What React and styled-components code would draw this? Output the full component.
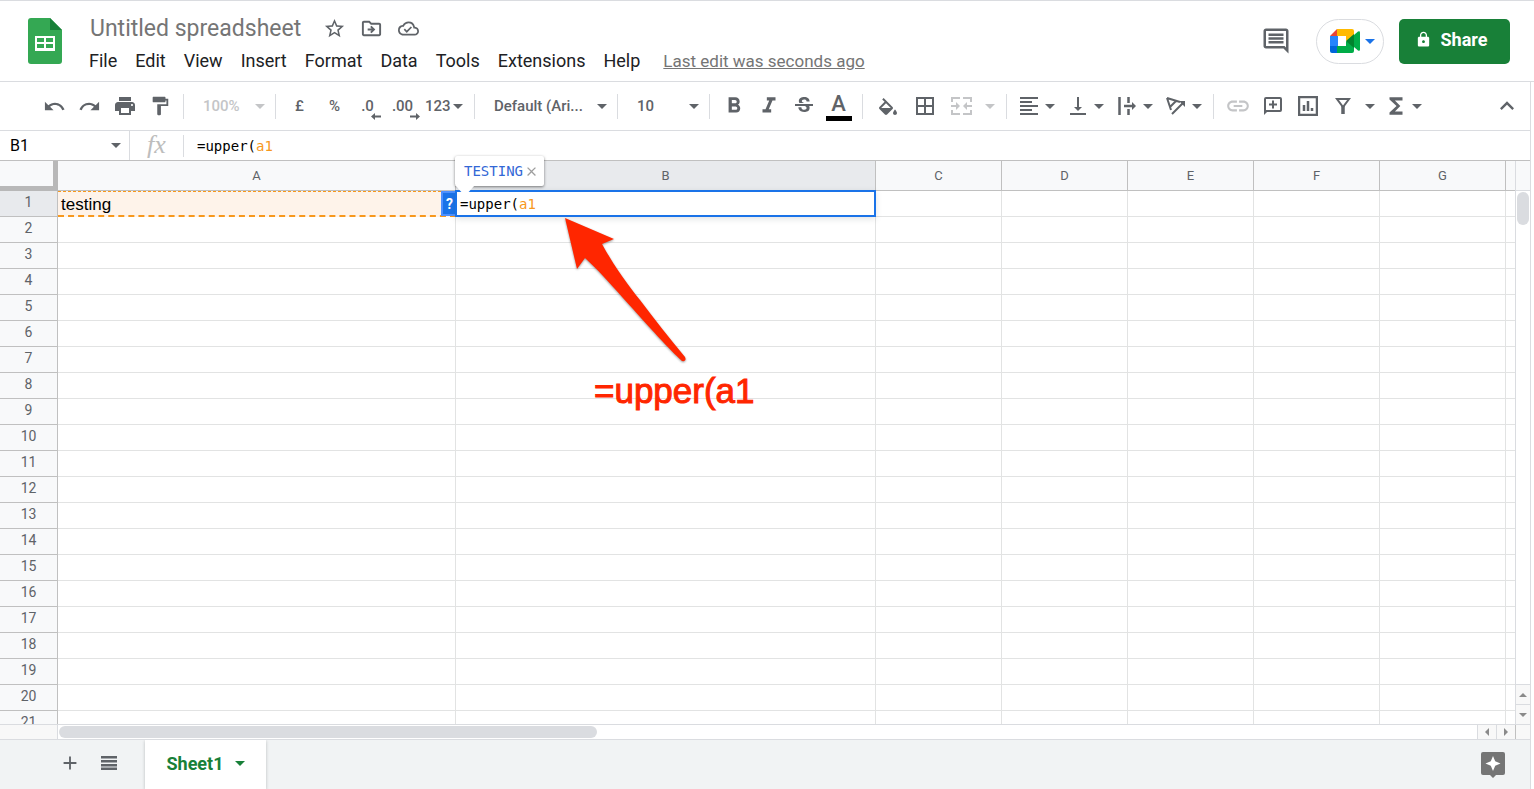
import { useState } from 'react';
import styled, { createGlobalStyle } from 'styled-components';
import {
  MdStarBorder, MdOutlineDriveFileMove, MdOutlineCloudDone, MdOutlineInsertComment, MdLock,
  MdUndo, MdRedo, MdPrint, MdFormatPaint, MdFormatBold, MdFormatItalic, MdStrikethroughS,
  MdBorderAll, MdFormatAlignLeft, MdVerticalAlignBottom, MdInsertLink,
  MdFunctions, MdKeyboardArrowUp, MdAdd, MdClose
} from 'react-icons/md';

const columnas = ['A', 'B', 'C', 'D', 'E', 'F', 'G', ''];
const filas = Array.from({ length: 21 }, (_, i) => i + 1);
const menus = ['File', 'Edit', 'View', 'Insert', 'Format', 'Data', 'Tools', 'Extensions', 'Help'];

/* Small triangle of every drop-down */
const Caret = ({ color = 'currentColor' }) => (
  <svg width="10" height="5" viewBox="0 0 10 5" fill={color} aria-hidden="true">
    <path d="M0 0h10L5 5z" />
  </svg>
);

const SheetsLogo = () => (
  <svg width="34" height="46" viewBox="0 0 34 46" aria-hidden="true">
    <path d="M3 0h19l12 12v31a3 3 0 0 1-3 3H3a3 3 0 0 1-3-3V3a3 3 0 0 1 3-3z" fill="#34a853" />
    <path d="M22 0l12 12H22z" fill="#188038" />
    <path fillRule="evenodd" d="M7 18h20v15H7zM9 20v4h7v-4zM18 20v4h7v-4zM9 26v4h7v-4zM18 26v4h7v-4z" fill="#fff" />
  </svg>
);

const MeetLogo = () => (
  <svg width="30" height="24" viewBox="0 0 30 24" aria-hidden="true">
    <path d="M0 7h8v10H0z" fill="#2684fc" />
    <path d="M0 7l7-7h1v7z" fill="#ea4335" />
    <path d="M0 17h8v7H2a2 2 0 0 1-2-2z" fill="#0066da" />
    <path d="M7 0h15a2 2 0 0 1 2 2v6l-8 4V7H7z" fill="#ffba00" />
    <path d="M7 17h9v-5l8 4v6a2 2 0 0 1-2 2H7z" fill="#00ac47" />
    <path d="M16 12l8-7v14z" fill="#00832d" />
    <path d="M24 6l4-3.500q2-1 2 1v17q0 2-2 1l-4-3.500z" fill="#00ac47" />
  </svg>
);

const DecimalIcon = ({ text, right }) => (
  <DecimalBox>
    {text}
    <svg width="10" height="7" viewBox="0 0 10 7" aria-hidden="true">
      <path d={right ? 'M0 2.500h6V0l4 3.500L6 7V4.500H0z' : 'M10 2.500H4V0L0 3.500 4 7V4.500h6z'} fill="#5f6368" />
    </svg>
  </DecimalBox>
);

const FillIcon = () => (
  <svg width="18" height="17" viewBox="3 0 18 17" fill="currentColor" aria-hidden="true">
    <path d="M16.560 8.940L7.620 0 6.210 1.410l2.380 2.380-5.150 5.150c-.590.590-.590 1.540 0 2.120l5.500 5.500c.290.290.680.440 1.060.440s.770-.150 1.060-.440l5.500-5.500c.590-.580.590-1.530 0-2.120zM5.210 10L10 5.210 14.790 10H5.210zM19 11.500s-2 2.170-2 3.500c0 1.100.9 2 2 2s2-.9 2-2c0-1.330-2-3.500-2-3.500z" />
  </svg>
);

const MergeIcon = () => (
  <svg width="21" height="18" viewBox="0 0 21 18" fill="none" stroke="currentColor" strokeWidth="2" aria-hidden="true">
    <path d="M1 5V1h8M12 1h8v4M1 13v4h8M12 17h8v-4M0 9h6M21 9h-6" />
    <path d="M5 5l4 4-4 4zM16 5l-4 4 4 4z" fill="currentColor" stroke="none" />
  </svg>
);

const WrapIcon = () => (
  <svg width="18" height="18" viewBox="0 0 18 18" fill="none" stroke="currentColor" strokeWidth="2" aria-hidden="true">
    <path d="M1.500 0v18M10.500 0v6M10.500 12v6M6 9h9" strokeWidth="2.500" />
    <path d="M14 5l4 4-4 4z" fill="currentColor" stroke="none" />
  </svg>
);

const RotateIcon = () => (
  <svg width="20" height="18" viewBox="0 0 20 18" fill="none" stroke="currentColor" strokeWidth="2" aria-hidden="true">
    <path d="M1 1l4 12M1 1l13 4M4 10l6-6M6 17L17 6" />
    <path d="M13 4h6v6z" fill="currentColor" stroke="none" />
  </svg>
);

const AddCommentIcon = () => (
  <svg width="18" height="18" viewBox="0 0 18 18" fill="none" stroke="currentColor" strokeWidth="2" aria-hidden="true">
    <path d="M1 15V2a1 1 0 0 1 1-1h14a1 1 0 0 1 1 1v11a1 1 0 0 1-1 1H2M5 7.500h8M9 3.500v8" />
    <path d="M0 18v-5h5z" fill="currentColor" stroke="none" />
  </svg>
);

const ChartIcon = () => (
  <svg width="20" height="20" viewBox="0 0 20 20" fill="none" stroke="currentColor" strokeWidth="2" aria-hidden="true">
    <path d="M1 1h18v18H1zM6 9v6M10 5v10M14 12v3" strokeWidth="2.500" />
  </svg>
);

const FilterIcon = () => (
  <svg width="16" height="16" viewBox="0 0 16 16" fill="none" stroke="currentColor" strokeWidth="2" aria-hidden="true">
    <path d="M2 1h12L8 9z" />
    <path d="M8 8v8" strokeWidth="3.500" />
  </svg>
);

const ExploreIcon = () => (
  <svg width="24" height="26" viewBox="0 0 24 26" aria-hidden="true">
    <path d="M2 0h20a2 2 0 0 1 2 2v19a2 2 0 0 1-2 2h-7l-3 3-3-3H2a2 2 0 0 1-2-2V2a2 2 0 0 1 2-2z" fill="#757575" />
    <path d="M12 4l2.200 5.300L19.500 11.500l-5.300 2.200L12 19l-2.200-5.300L4.500 11.500l5.300-2.200z" fill="#fff" />
  </svg>
);

const Formula = () => <>=upper(<Reference>a1</Reference></>;

function App() {
  const [titulo, setTitulo] = useState('Untitled spreadsheet');
  const [celda, setCelda] = useState('B1');

  return (
    <>
      <GlobalStyle />
      <Page>
        <Header>
          <SheetsLogo />
          <HeaderMain>
            <TitleRow>
              <TitleInput aria-label="Title" value={titulo} onChange={(e) => setTitulo(e.target.value)} />
              <TitleButton aria-label="Star"><MdStarBorder size={23} /></TitleButton>
              <TitleButton aria-label="Move"><MdOutlineDriveFileMove size={23} /></TitleButton>
              <TitleButton aria-label="Saved"><MdOutlineCloudDone size={21} /></TitleButton>
            </TitleRow>
            <MenuRow>
              {menus.map((menu) => <MenuButton key={menu}>{menu}</MenuButton>)}
              <LastEdit href="#history">Last edit was seconds ago</LastEdit>
            </MenuRow>
          </HeaderMain>
          <HeaderActions>
            <IconButton aria-label="Comments"><MdOutlineInsertComment size={30} /></IconButton>
            <MeetButton aria-label="Meet"><MeetLogo /><Caret color="#1a73e8" /></MeetButton>
            <ShareButton><MdLock size={17} />Share</ShareButton>
          </HeaderActions>
        </Header>

        <Editor>
          <Toolbar>
            <ToolButton aria-label="Undo"><MdUndo size={23} /></ToolButton>
            <ToolButton aria-label="Redo"><MdRedo size={23} /></ToolButton>
            <ToolButton aria-label="Print"><MdPrint size={24} /></ToolButton>
            <ToolButton aria-label="Paint format"><MdFormatPaint size={22} /></ToolButton>
            <Separator />
            <ToolSelect $width={79} disabled>100%<Caret /></ToolSelect>
            <Separator />
            <ToolButton>£</ToolButton>
            <ToolButton>%</ToolButton>
            <ToolButton aria-label="Decrease decimals"><DecimalIcon text=".0" /></ToolButton>
            <ToolButton aria-label="Increase decimals"><DecimalIcon text=".00" right /></ToolButton>
            <FormatButton>123<Caret /></FormatButton>
            <Separator />
            <ToolSelect $width={130}>Default (Ari...<Caret /></ToolSelect>
            <Separator />
            <ToolSelect $width={79}>10<Caret /></ToolSelect>
            <Separator />
            <ToolButton aria-label="Bold"><MdFormatBold size={26} /></ToolButton>
            <ToolButton aria-label="Italic"><MdFormatItalic size={26} /></ToolButton>
            <ToolButton aria-label="Strikethrough"><MdStrikethroughS size={24} /></ToolButton>
            <ToolButton aria-label="Text color"><ColorLetter>A</ColorLetter></ToolButton>
            <Separator />
            <ToolButton $wide aria-label="Fill color"><FillIcon /></ToolButton>
            <ToolButton $wide aria-label="Borders"><MdBorderAll size={24} /></ToolButton>
            <ToolButton $wide disabled aria-label="Merge cells"><MergeIcon /></ToolButton>
            <CaretButton disabled aria-label="Merge type"><Caret /></CaretButton>
            <Separator />
            <DropButton aria-label="Horizontal align"><MdFormatAlignLeft size={24} /><Caret /></DropButton>
            <DropButton aria-label="Vertical align"><MdVerticalAlignBottom size={24} /><Caret /></DropButton>
            <DropButton aria-label="Text wrapping"><WrapIcon /><Caret /></DropButton>
            <DropButton aria-label="Text rotation"><RotateIcon /><Caret /></DropButton>
            <Separator $tight />
            <ToolButton disabled aria-label="Insert link"><MdInsertLink size={26} /></ToolButton>
            <ToolButton aria-label="Insert comment"><AddCommentIcon /></ToolButton>
            <ToolButton aria-label="Insert chart"><ChartIcon /></ToolButton>
            <ToolButton aria-label="Filter"><FilterIcon /></ToolButton>
            <CaretButton aria-label="Filter views"><Caret /></CaretButton>
            <DropButton aria-label="Functions"><MdFunctions size={26} /><Caret /></DropButton>
            <CollapseButton aria-label="Hide menus"><MdKeyboardArrowUp size={28} /></CollapseButton>
          </Toolbar>

          <FormulaBar>
            <NameBox>
              <NameInput aria-label="Name box" value={celda} onChange={(e) => setCelda(e.target.value)} />
              <NameCaret aria-label="Named ranges"><Caret /></NameCaret>
            </NameBox>
            <Fx>fx</Fx>
            <FormulaText role="textbox" aria-label="Formula" contentEditable suppressContentEditableWarning>
              <Formula />
            </FormulaText>
          </FormulaBar>

          <Workspace>
            <GridView>
              <Grid>
                <colgroup>
                  <Col $width={58} />
                  <Col $width={398} />
                  <Col $width={420} />
                  {['C', 'D', 'E', 'F', 'G'].map((c) => <Col key={c} $width={126} />)}
                  <col />
                </colgroup>
                <thead>
                  <tr>
                    <Corner />
                    {columnas.map((c) => <ColHead key={c} scope="col" $active={c === 'B'}>{c}</ColHead>)}
                  </tr>
                </thead>
                <tbody>
                  {filas.map((n) => (
                    <tr key={n}>
                      <RowHead scope="row" $active={n === 1}>{n}</RowHead>
                      {columnas.map((c) => {
                        if (n === 1 && c === 'A') return (
                          <Cell key={c}><LinkedCell>testing<HelpBadge>?</HelpBadge></LinkedCell></Cell>
                        );
                        if (n === 1 && c === 'B') return (
                          <Cell key={c}>
                            <CellEditor role="textbox" aria-label="Cell B1" contentEditable suppressContentEditableWarning>
                              <Formula />
                            </CellEditor>
                          </Cell>
                        );
                        return <Cell key={c} />;
                      })}
                    </tr>
                  ))}
                </tbody>
              </Grid>
            </GridView>
            <VerticalBar>
              <VerticalTop />
              <VerticalTrack><VerticalThumb /></VerticalTrack>
              <ScrollButton $vertical aria-label="Scroll up">
                <svg width="8" height="4" viewBox="0 0 8 4"><path d="M0 4l4-4 4 4z" fill="#8a8a8a" /></svg>
              </ScrollButton>
              <ScrollButton $vertical aria-label="Scroll down">
                <svg width="8" height="4" viewBox="0 0 8 4"><path d="M0 0l4 4 4-4z" fill="#8a8a8a" /></svg>
              </ScrollButton>
            </VerticalBar>

            <ResultTip>
              TESTING
              <TipClose aria-label="Close preview"><MdClose size={15} /></TipClose>
              <TipTail width="20" height="12" viewBox="0 0 20 12"><path d="M0 0h20l-10 11z" fill="#fff" /></TipTail>
            </ResultTip>
            <Arrow width="130" height="155" viewBox="0 0 130 155" aria-hidden="true">
              <path
                d="M5 5L54 26 42 31C54 53 68 72 80 87 95 107 110 126 125 144Q127 149 122 148C110 137 90 115 63 85 49 69 36 55 25 45L17 56z"
                fill="#ff2600"
              />
            </Arrow>
            <Annotation>=upper(a1</Annotation>
          </Workspace>

          <HorizontalBar>
            <HorizontalStub />
            <HorizontalTrack><HorizontalThumb /></HorizontalTrack>
            <ScrollButton aria-label="Scroll left">
              <svg width="4" height="8" viewBox="0 0 4 8"><path d="M4 0L0 4l4 4z" fill="#8a8a8a" /></svg>
            </ScrollButton>
            <ScrollButton aria-label="Scroll right">
              <svg width="4" height="8" viewBox="0 0 4 8"><path d="M0 0l4 4-4 4z" fill="#8a8a8a" /></svg>
            </ScrollButton>
            <BarCorner />
          </HorizontalBar>

          <Footer>
            <FooterButton aria-label="Add sheet"><MdAdd size={22} /></FooterButton>
            <FooterButton aria-label="All sheets">
              <svg width="16" height="14" viewBox="0 0 16 14" fill="#5f6368">
                <path d="M0 0h16v2.500H0zM0 4h16v2.500H0zM0 8h16v2.500H0zM0 11.500h16V14H0z" />
              </svg>
            </FooterButton>
            <SheetTab>Sheet1<Caret /></SheetTab>
            <ExploreButton aria-label="Explore"><ExploreIcon /></ExploreButton>
          </Footer>
        </Editor>
      </Page>
    </>
  )
}

export default App

const GlobalStyle = createGlobalStyle`
  * { box-sizing: border-box; }
  body {
    margin: 0;
    overflow: hidden;
    background: #fff;
    font-family: Roboto, "Liberation Sans", sans-serif;
  }
  button, input {
    font: inherit;
    color: inherit;
    border: 0;
    padding: 0;
    background: none;
    outline: none;
  }
  svg { display: block; flex: none; }
`;

const Page = styled.div`
  display: flex;
  flex-direction: column;
  height: 100vh;
  border-top: 1px solid #dadce0;
`;

/* Header */
const Header = styled.header`
  display: flex;
  padding: 17px 24px 0 28px;
  height: 81px;
  flex: none;
  border-bottom: 1px solid #dadce0;
`;

const HeaderMain = styled.div`
  margin-left: 18px;
`;

const TitleRow = styled.div`
  display: flex;
  align-items: center;
  height: 20px;
`;

const TitleInput = styled.input`
  width: 236px;
  padding: 2px 0 0 10px;
  font-size: 23px;
  line-height: 32px;
  color: #757575;
`;

const TitleButton = styled.button`
  display: flex;
  justify-content: center;
  width: 37px;
  color: #5f6368;
`;

const MenuRow = styled.nav`
  display: flex;
  align-items: center;
  height: 46px;
`;

const MenuButton = styled.button`
  padding: 0 9px;
  font-size: 18px;
  line-height: 24px;
  color: #202124;
`;

const LastEdit = styled.a`
  margin-left: 14px;
  font-size: 17px;
  line-height: 24px;
  color: #757575;
`;

const HeaderActions = styled.div`
  display: flex;
  align-items: center;
  height: 46px;
  margin-left: auto;
`;

const IconButton = styled.button`
  color: #5f6368;
`;

const MeetButton = styled.button`
  display: flex;
  align-items: center;
  justify-content: flex-end;
  gap: 5px;
  width: 68px;
  height: 45px;
  margin: 0 15px 0 25px;
  padding-right: 8px;
  border: 1px solid #dadce0;
  border-radius: 23px;
`;

const ShareButton = styled.button`
  display: flex;
  align-items: center;
  justify-content: center;
  gap: 9px;
  width: 111px;
  height: 45px;
  padding: 0 7px 3px 0;
  border-radius: 5px;
  background: #188038;
  color: #fff;
  font-size: 18px;
  font-weight: 700;
`;

/* Toolbar */
const Editor = styled.main`
  display: flex;
  flex-direction: column;
  flex: 1;
  min-height: 0;
  margin-right: 3px;
  border-right: 1px solid #dadce0;
`;

const Toolbar = styled.div`
  display: flex;
  align-items: center;
  flex: none;
  height: 49px;
  padding: 0 6px 0 37px;
  border-bottom: 1px solid #dadce0;
  color: #5f6368;
  font-size: 15px;
  font-weight: 500;
`;

const ToolButton = styled.button`
  display: flex;
  align-items: center;
  justify-content: center;
  flex: none;
  width: ${(props) => (props.$wide ? 37 : 35)}px;
  height: 32px;
  color: ${(props) => (props.disabled ? '#c4c5c7' : '#5f6368')};
`;

const CollapseButton = styled(ToolButton)`
  margin-left: auto;
`;

const Separator = styled.span`
  flex: none;
  width: 1px;
  height: 25px;
  margin: ${(props) => (props.$tight ? '0 6px 0 4px' : '0 6px')};
  background: #dadce0;
`;

const ToolSelect = styled.button`
  display: flex;
  align-items: center;
  justify-content: space-between;
  flex: none;
  width: ${(props) => props.$width}px;
  padding: 0 4px 0 13px;
  color: ${(props) => (props.disabled ? '#c4c5c7' : '#5f6368')};
`;

const FormatButton = styled.button`
  display: flex;
  align-items: center;
  justify-content: space-between;
  width: 46px;
  padding: 0 5px 0 3px;
`;

const DropButton = styled.button`
  display: flex;
  align-items: center;
  flex: none;
  width: 49px;
  justify-content: space-between;
  padding: 0 7px 0 0;

  svg:first-child {
    margin: 0 auto;
  }
`;

const CaretButton = styled.button`
  display: flex;
  justify-content: center;
  flex: none;
  width: 20px;
  color: ${(props) => (props.disabled ? '#c4c5c7' : '#5f6368')};
`;

const DecimalBox = styled.span`
  position: relative;
  padding-right: 4px;

  svg {
    position: absolute;
    right: -3px;
    bottom: -5px;
  }
`;

const ColorLetter = styled.span`
  width: 26px;
  border-bottom: 5px solid #000;
  font-size: 22px;
  line-height: 24px;
`;

/* Formula bar */
const FormulaBar = styled.div`
  display: flex;
  align-items: center;
  flex: none;
  height: 30px;
  border-bottom: 1px solid #c0c0c0;
`;

const NameBox = styled.div`
  display: flex;
  align-items: center;
  width: 130px;
  height: 100%;
  padding: 0 8px 0 10px;
  border-right: 1px solid #dadce0;
`;

const NameInput = styled.input`
  flex: 1;
  min-width: 0;
  font-size: 16px;
  color: #000;
`;

const NameCaret = styled.button`
  color: #5f6368;
`;

const Fx = styled.span`
  width: 54px;
  height: 22px;
  border-right: 1px solid #dadce0;
  font-family: "Liberation Serif", serif;
  font-size: 26px;
  font-style: italic;
  line-height: 20px;
  text-align: center;
  color: #bdbdbd;
`;

const FormulaText = styled.div`
  flex: 1;
  padding-left: 13px;
  outline: none;
  font-family: "DejaVu Sans Mono", monospace;
  font-size: 14px;
  line-height: 16px;
  color: #000;
`;

const Reference = styled.span`
  color: #f7981d;
`;

/* Grid */
const Workspace = styled.div`
  position: relative;
  display: flex;
  flex: 1;
  min-height: 0;
`;

const GridView = styled.div`
  flex: 1;
  min-width: 0;
  overflow: hidden;
`;

const Grid = styled.table`
  width: 100%;
  table-layout: fixed;
  border-collapse: separate;
  border-spacing: 0;
`;

const Col = styled.col`
  width: ${(props) => props.$width}px;
`;

const Corner = styled.td`
  height: 30px;
  background: #f8f9fa;
  border-right: 5px solid #b8b8b8;
  border-bottom: 5px solid #b8b8b8;
`;

const ColHead = styled.th`
  height: 30px;
  padding: 0;
  background: ${(props) => (props.$active ? '#e8eaed' : '#f8f9fa')};
  border-right: 1px solid #c0c0c0;
  border-bottom: 1px solid #c0c0c0;
  font-size: 13px;
  font-weight: 400;
  color: #5f6368;

  &:last-child {
    border-right: 0;
  }
`;

const RowHead = styled.th`
  height: 26px;
  padding: 0 0 3px;
  background: ${(props) => (props.$active ? '#e8eaed' : '#f8f9fa')};
  border-right: 1px solid #c0c0c0;
  border-bottom: 1px solid #c0c0c0;
  font-size: 14px;
  font-weight: 400;
  line-height: 16px;
  color: #5f6368;
`;

const Cell = styled.td`
  position: relative;
  height: 26px;
  padding: 0;
  border-right: 1px solid #e2e3e3;
  border-bottom: 1px solid #e2e3e3;

  &:last-child {
    border-right: 0;
  }
`;

const LinkedCell = styled.div`
  position: absolute;
  inset: 0 -1px -1px 0;
  padding-left: 3px;
  border-top: 1px dashed #f7981d;
  border-bottom: 2px dashed #f7981d;
  background: #fef3ea;
  font-family: "Liberation Sans", Arial, sans-serif;
  font-size: 17px;
  line-height: 25px;
  color: #000;
`;

const HelpBadge = styled.button`
  position: absolute;
  top: -1px;
  right: 0;
  width: 15px;
  height: 25px;
  background: #1a73e8;
  border: 2px solid #4d90fe;
  border-right: 0;
  color: #fff;
  font-family: Roboto, sans-serif;
  font-size: 14px;
  font-weight: 700;
  line-height: 20px;
`;

const CellEditor = styled.div`
  position: absolute;
  inset: -1px;
  padding-left: 3px;
  border: 2px solid #1a73e8;
  background: #fff;
  box-shadow: 0 2px 6px rgba(60, 64, 67, .15);
  outline: none;
  z-index: 1;
  font-family: "DejaVu Sans Mono", monospace;
  font-size: 14px;
  line-height: 24px;
  color: #000;
`;

/* Preview bubble over the edited cell */
const ResultTip = styled.div`
  position: absolute;
  top: -5px;
  left: 455px;
  z-index: 2;
  display: flex;
  align-items: center;
  width: 89px;
  height: 30px;
  padding-left: 9px;
  background: #fff;
  border-radius: 2px;
  box-shadow: 0 1px 3px rgba(0, 0, 0, .5);
  font-family: "DejaVu Sans Mono", monospace;
  font-size: 14px;
  color: #3367d6;
`;

const TipClose = styled.button`
  padding-left: 1px;
  color: #9e9e9e;
`;

const TipTail = styled.svg`
  position: absolute;
  top: 29px;
  left: 0;
`;

const Arrow = styled.svg`
  position: absolute;
  top: 52px;
  left: 560px;
  z-index: 2;
  filter: drop-shadow(0 1px 1px rgba(0, 0, 0, .4));
`;

const Annotation = styled.span`
  position: absolute;
  top: 208px;
  left: 594px;
  z-index: 2;
  font-family: "Liberation Sans", Arial, sans-serif;
  font-size: 35px;
  line-height: 44px;
  -webkit-text-stroke: 1px #ff2600;
  color: #ff2600;
`;

/* Scroll bars */
const VerticalBar = styled.div`
  display: flex;
  flex-direction: column;
  flex: none;
  width: 15px;
  border-left: 1px solid #dadce0;
`;

const VerticalTop = styled.div`
  height: 30px;
  background: #f8f9fa;
  border-bottom: 1px solid #dadce0;
`;

const VerticalTrack = styled.div`
  flex: 1;
  padding: 1px;
`;

const VerticalThumb = styled.div`
  height: 33px;
  border-radius: 6px;
  background: #dadce0;
`;

const ScrollButton = styled.button`
  display: flex;
  align-items: center;
  justify-content: center;
  flex: none;
  width: ${(props) => (props.$vertical ? 'auto' : '19px')};
  height: ${(props) => (props.$vertical ? '20px' : '100%')};
  background: #f8f8f8;
  border: 0 solid #dadce0;
  border-width: ${(props) => (props.$vertical ? '1px 0 0' : '0 0 0 1px')};
`;

const HorizontalBar = styled.div`
  display: flex;
  flex: none;
  height: 16px;
  border-top: 1px solid #dadce0;
  border-bottom: 1px solid #dadce0;
`;

const HorizontalStub = styled.div`
  width: 58px;
  background: #f8f8f8;
  border-right: 1px solid #dadce0;
`;

const HorizontalTrack = styled.div`
  flex: 1;
  padding: 1px;
`;

const HorizontalThumb = styled.div`
  width: 38%;
  height: 12px;
  border-radius: 6px;
  background: #dadce0;
`;

const BarCorner = styled.div`
  width: 15px;
  background: #f8f8f8;
  border-left: 1px solid #c0c0c0;
`;

/* Sheet tabs */
const Footer = styled.footer`
  display: flex;
  align-items: center;
  flex: none;
  height: 49px;
  padding: 0 25px 0 50px;
  background: #f1f3f4;
`;

const FooterButton = styled.button`
  display: flex;
  justify-content: center;
  width: 39px;
  padding-bottom: 3px;
  color: #5f6368;
`;

const SheetTab = styled.button`
  display: flex;
  align-items: center;
  justify-content: center;
  gap: 11px;
  width: 121px;
  height: 100%;
  margin-left: 17px;
  padding-bottom: 3px;
  background: #fff;
  box-shadow: 0 1px 3px rgba(60, 64, 67, .3);
  clip-path: inset(0 -3px);
  color: #188038;
  font-size: 18px;
  font-weight: 700;
`;

const ExploreButton = styled.button`
  margin-left: auto;
`;
